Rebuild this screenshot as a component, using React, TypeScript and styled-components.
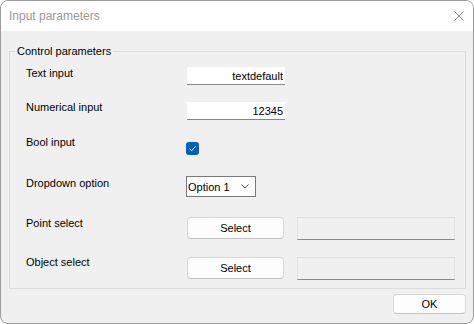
import React from 'react';
import styled, { createGlobalStyle } from 'styled-components';

const GlobalStyle = createGlobalStyle`
  html, body {
    margin: 0;
    padding: 0;
    background: #ffffff;
  }
  body {
    font-family: "Liberation Sans", Arial, sans-serif;
  }
`;

const Window = styled.div`
  width: 474px;
  height: 324px;
  box-sizing: border-box;
  border: 1px solid #9c9c9c;
  border-radius: 8px;
  overflow: hidden;
  display: flex;
  flex-direction: column;
  background: #f0f0f0;
`;

const TitleBar = styled.div`
  height: 30px;
  flex: none;
  background: #ffffff;
  display: flex;
  align-items: center;
  justify-content: space-between;
  padding: 0 9px 0 8px;
`;

const Title = styled.span`
  font-size: 12px;
  color: #9a9a9a;
`;

const CloseButton = styled.button`
  border: none;
  background: none;
  padding: 0;
  width: 10px;
  height: 10px;
  display: flex;
`;

const Body = styled.div`
  flex: 1;
  display: flex;
  flex-direction: column;
  padding: 14px 7px 7px 8px;
`;

const GroupBox = styled.fieldset`
  margin: 0;
  padding: 0;
  min-inline-size: 0;
  border: 1px solid #dcdcdc;
`;

const Legend = styled.legend`
  margin-left: 5px;
  padding: 0 2px;
  font-size: 11px;
  line-height: 13px;
  color: #000;
`;

const Content = styled.div`
  display: flex;
  flex-direction: column;
  padding: 9px 0 9px 16px;
`;

const Row = styled.div<{ $h: number }>`
  display: flex;
  align-items: flex-start;
  height: ${p => p.$h}px;
`;

const Label = styled.div<{ $dy?: number }>`
  width: 160px;
  flex: none;
  margin-top: ${p => p.$dy ?? 0}px;
  font-size: 11px;
  line-height: 13px;
  color: #000;
`;

const TextBox = styled.input`
  width: 98px;
  height: 18px;
  margin: 0 0 0 1px;
  box-sizing: border-box;
  border: none;
  border-bottom: 1px solid #868686;
  background: #ffffff;
  padding: 0 2px 0 0;
  text-align: right;
  font-family: "Liberation Sans", Arial, sans-serif;
  font-size: 11px;
  color: #000;
  outline: none;
`;

const CheckBox = styled.div`
  width: 13px;
  height: 13px;
  margin-top: 6px;
  border-radius: 3px;
  background: #005fb8;
  display: flex;
  align-items: center;
  justify-content: center;
`;

const Dropdown = styled.div`
  width: 70px;
  height: 21px;
  box-sizing: border-box;
  border: 1px solid #7a7a7a;
  background: #ffffff;
  display: flex;
  align-items: center;
  justify-content: space-between;
  padding: 0 6px 0 1px;
  font-size: 11px;
  color: #000;
`;

const PushButton = styled.button<{ $w: number; $h: number }>`
  width: ${p => p.$w}px;
  height: ${p => p.$h}px;
  box-sizing: border-box;
  border: 1px solid #d6d6d6;
  border-bottom-color: #c4c4c4;
  border-radius: 4px;
  background: #fdfdfd;
  font-family: "Liberation Sans", Arial, sans-serif;
  font-size: 11px;
  color: #000;
  padding: 0;
`;

const SelectButton = styled(PushButton)`
  margin-left: 1px;
`;

const ResultBox = styled.div`
  width: 158px;
  height: 23px;
  margin-left: 13px;
  box-sizing: border-box;
  border: 1px solid #e2e2e2;
  border-bottom: 1px solid #8a8a8a;
  background: #f0f0f0;
`;

const Footer = styled.div`
  display: flex;
  justify-content: flex-end;
  margin-top: 5px;
`;

const App: React.FC = () => {
  return (
    <>
      <GlobalStyle />
      <Window>
        <TitleBar>
          <Title>Input parameters</Title>
          <CloseButton aria-label="Close">
            <svg width="10" height="10" viewBox="0 0 10 10">
              <path d="M0.5 0.5 L9.5 9.5 M9.5 0.5 L0.5 9.5" stroke="#8a8a8a" strokeWidth="1" fill="none" />
            </svg>
          </CloseButton>
        </TitleBar>
        <Body>
          <GroupBox>
            <Legend>Control parameters</Legend>
            <Content>
              <Row $h={35}>
                <Label>Text input</Label>
                <TextBox readOnly value="textdefault" />
              </Row>
              <Row $h={34}>
                <Label $dy={-1}>Numerical input</Label>
                <TextBox readOnly value="12345" />
              </Row>
              <Row $h={40}>
                <Label>Bool input</Label>
                <CheckBox>
                  <svg width="9" height="9" viewBox="0 0 9 9">
                    <path d="M1.5 4.8 L3.6 6.8 L7.5 2.4" stroke="#ffffff" strokeWidth="1" fill="none" />
                  </svg>
                </CheckBox>
              </Row>
              <Row $h={41}>
                <Label $dy={1}>Dropdown option</Label>
                <Dropdown>
                  <span>Option 1</span>
                  <svg width="8" height="5" viewBox="0 0 8 5">
                    <path d="M0.5 0.5 L4 4 L7.5 0.5" stroke="#555" strokeWidth="1" fill="none" />
                  </svg>
                </Dropdown>
              </Row>
              <Row $h={40}>
                <Label>Point select</Label>
                <SelectButton $w={97} $h={22}>Select</SelectButton>
                <ResultBox />
              </Row>
              <Row $h={22}>
                <Label $dy={-1}>Object select</Label>
                <SelectButton $w={97} $h={22}>Select</SelectButton>
                <ResultBox />
              </Row>
            </Content>
          </GroupBox>
          <Footer>
            <PushButton $w={73} $h={20}>OK</PushButton>
          </Footer>
        </Body>
      </Window>
    </>
  );
};

export default App;
